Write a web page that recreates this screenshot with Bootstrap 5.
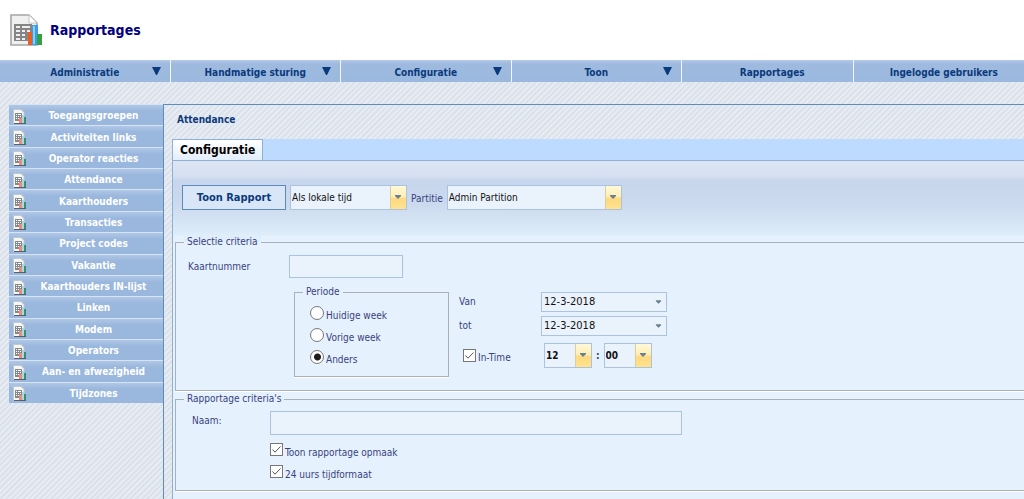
<!DOCTYPE html>
<html lang="nl">
<head>
<meta charset="utf-8">
<meta name="viewport" content="width=device-width, initial-scale=1">
<title>Rapportages</title>
<link href="https://cdn.jsdelivr.net/npm/bootstrap@5.3.0/dist/css/bootstrap.min.css" rel="stylesheet">
<style>
body{font-family:"DejaVu Sans Condensed","DejaVu Sans",sans-serif;font-size:10px;line-height:12px;color:#3a3f80;
  background:repeating-linear-gradient(135deg,#dbe2ec 0 2px,#e7ebf2 2px 4px)}
.site-head{height:60px;padding:0 10px}
.site-head h1{font-size:14px;line-height:18px;color:#000080}
.menu-bar{background:linear-gradient(#b4c9e6,#9ebadf 4px,#9bb8de);height:22px}
.menu-item{flex:1 1 0;color:#0b3a7c;border-right:1px solid #f2f7fd;padding:3px 0 0 10px}
.menu-item:last-child{border-right:0}
.menu-item.has-menu{padding-right:9px;padding-left:0}
.menu-item svg{margin-bottom:3px}
.menu-item:hover{color:#000080}
.menu-text{flex:1;text-align:center}
.has-menu .menu-text{margin-right:-18px}
.content-row{padding:22px 0 0 9px}
.side-menu{width:154px;min-height:299px;grid-auto-rows:1fr}
.side-menu a{color:#fff;border-top:1px solid #d5e3f4;background:linear-gradient(#b0c8e6,#9ab7dd 6px,#9ab7dd);padding:2px 0 0 4px}
.side-menu span{flex:1;text-align:center;margin-right:3px}
.panel{border:solid #5c8ebd;border-width:1px 0 0 1px;padding-left:8px;min-width:0}
.panel-title{color:#0b3a7c;padding:9px 5px 13px}
.tab-strip{background:#bddaff;border-bottom:1px solid #8eafd6}
.tab-btn{font-size:12px;line-height:20px;color:#000;border:solid #8eafd6;border-width:1px 1px 0 1px;background:linear-gradient(#fff,#e3eefb);padding:0 7px;border-radius:0}
.tab-body{border-left:1px solid #8eafd6;background:#e5f2fd;padding:0 0 0 2px}
.tool-row{height:75px;margin-left:-2px;padding:24px 0 0 9px;
  background:linear-gradient(#dce5f3 0,#d5e0f1 15px,#c7d6ec 20px,#cbdaee 44px,#dfeefa 75px)}
.report-btn{width:104px;height:25px;color:#0b3a7c;background:#d8e6f7;border:1px solid #5b8bbd;border-radius:0;font-size:11px;line-height:12px}
.pick{appearance:none;height:25px;border:1px solid #abc3e0;border-radius:0;background-color:#eaf2fc;color:#111;padding:0 20px 0 1px;
  background-image:url("data:image/svg+xml,%3Csvg xmlns='http://www.w3.org/2000/svg' viewBox='0 0 8 5'%3E%3Cpath d='M1 0h6v1L4 4 1 1z' fill='%23698094'/%3E%3C/svg%3E"),linear-gradient(90deg,#d9cf9d 0 1px,transparent 1px),linear-gradient(#fff9d9 0,#ffefb4 45%,#ffd981 55%,#ffe38d);
  background-repeat:no-repeat;background-size:8px 5px,16px 100%,16px 100%;background-position:right 4px center,right,right}
.pick-time{width:117px}
.pick-part{width:175px}
.pick-hour{width:48px;font-weight:bold}
.pick-date{width:126px;height:20px;font-size:11px;background-size:7px 5px;padding-left:2px;
  background-image:url("data:image/svg+xml,%3Csvg xmlns='http://www.w3.org/2000/svg' viewBox='0 0 8 5'%3E%3Cpath d='M1 0h6v1L4 4 1 1z' fill='%23698094'/%3E%3C/svg%3E")}
.field{height:23px;border:1px solid #abc3e0;border-radius:0;background:#eaf2fc}
.box{border:1px solid #a9b1b8;box-shadow:0 1px #fff;min-width:0}
.box-open{border-right:0}
.box legend{float:none;width:auto;margin:0 0 0 8px;padding:0 3px;font-size:10px;line-height:12px;background:#e5f2fd}
.select-box{padding:0 0 13px}
.select-box>legend{background:linear-gradient(#dfeefa 6px,#e5f2fd 6px)}
.card-row{margin-top:7px}
.col-label{width:105px;padding-left:12px}
.card-no{width:114px}
.period-row{padding-left:118px}
.period{width:155px;padding:8px 0 4px}
.period .opt{padding-left:15px}
.tick{appearance:none;flex:none;width:13px;height:13px;border:1px solid #777;background:#fff center/11px no-repeat;margin:0 2px 0 0}
.tick[type=radio]{width:14px;height:14px;border-radius:50%}
.tick[type=radio]:checked{background-image:radial-gradient(circle,#1d1d1d 3px,transparent 4px)}
.tick[type=checkbox]:checked{background-image:url("data:image/svg+xml,%3Csvg xmlns='http://www.w3.org/2000/svg' viewBox='0 0 11 11'%3E%3Cpath d='M1.5 5.5 4 8.2 9.5 2.5' fill='none' stroke='%23555'/%3E%3C/svg%3E")}
.opt{height:22px}
.opt label{padding-top:4px}
.date-col{margin-left:10px;padding-top:6px}
.date-label{width:82px}
.in-time{padding-left:4px;margin-top:7px}
.in-time .date-label{width:81px}
.report-box{margin-top:2px;padding:0 0 3px}
.name-row{margin-top:6px;margin-bottom:8px}
.name-label{width:94px;padding-left:16px}
.name-field{width:412px;height:24px}
.report-opt{padding-left:94px}
</style>
</head>
<body class="min-vh-100 d-flex flex-column">
<svg class="d-none" aria-hidden="true">
  <symbol id="report" viewBox="0 0 32 32">
    <path d="M1 1h18l8 8v22H1z" fill="#f0f0f0" stroke="#a5a5a5" stroke-width="1.6"/>
    <path d="M19 1v8h8z" fill="#fff" stroke="#c4c4c4"/>
    <path d="M4 10h18v17H4z" fill="#858585"/>
    <path d="M6 12h4v2H6zm6 0h8v2h-8zM6 16h4v2H6zm6 0h3v2h-3zm5 0h3v2h-3zM6 20h4v2H6zm6 0h3v2h-3zM6 24h4v2H6zm6 0h3v2h-3z" fill="#efefef"/>
    <path d="M18 18h5v13h-5z" fill="#e85f24"/><path d="M22 11h6v20h-6z" fill="#3b9de8"/><path d="M23 12h2v18h-2z" fill="#8dcdf8"/>
    <path d="M27 20h5v11h-5z" fill="#35a043"/>
  </symbol>
  <symbol id="report-sm" viewBox="0 0 14 15">
    <path d="M.5.5H8l3 3v11H.5z" fill="#f7f7f4" stroke="#c3c8cc"/>
    <path d="M2 4h7v8H2z" fill="#85898b"/>
    <path d="M3 5h1v1H3zm2 0h3v1H5zM3 7h1v1H3zm2 0h1v1H5zm2 0h1v1H7zM3 9h1v1H3zm2 0h1v1H5z" fill="#fff"/>
    <path d="M6 9h3v5H6z" fill="#ee8b78"/><path d="M9 6h2v8H9z" fill="#a9d9e6"/><path d="M11 8h2v6h-2z" fill="#35906b"/>
    <path d="M1 14h12v1H1z" fill="#58606a"/>
  </symbol>
  <symbol id="arrow" viewBox="0 0 9 8"><path d="M0 0h9L5 8H4z" fill="#0b3a7c"/></symbol>
</svg>

<header class="site-head bg-white d-flex align-items-center">
  <svg width="32" height="32" aria-hidden="true"><use href="#report"/></svg>
  <h1 class="fw-bold mb-0 ms-2">Rapportages</h1>
</header>

<nav class="menu-bar d-flex fw-bold" aria-label="Hoofdmenu">
  <a href="#" class="menu-item has-menu d-flex align-items-center text-decoration-none"><span class="menu-text">Administratie</span><svg width="9" height="8"><use href="#arrow"/></svg></a>
  <a href="#" class="menu-item has-menu d-flex align-items-center text-decoration-none"><span class="menu-text">Handmatige sturing</span><svg width="9" height="8"><use href="#arrow"/></svg></a>
  <a href="#" class="menu-item has-menu d-flex align-items-center text-decoration-none"><span class="menu-text">Configuratie</span><svg width="9" height="8"><use href="#arrow"/></svg></a>
  <a href="#" class="menu-item has-menu d-flex align-items-center text-decoration-none"><span class="menu-text">Toon</span><svg width="9" height="8"><use href="#arrow"/></svg></a>
  <a href="#" class="menu-item d-flex align-items-center text-decoration-none"><span class="menu-text">Rapportages</span></a>
  <a href="#" class="menu-item d-flex align-items-center text-decoration-none"><span class="menu-text">Ingelogde gebruikers</span></a>
</nav>

<div class="content-row d-flex flex-grow-1">
  <nav class="side-menu d-grid fw-bold align-self-start flex-shrink-0" aria-label="Rapporten">
    <a href="#" class="d-flex align-items-center text-decoration-none"><svg width="14" height="15"><use href="#report-sm"/></svg><span>Toegangsgroepen</span></a>
    <a href="#" class="d-flex align-items-center text-decoration-none"><svg width="14" height="15"><use href="#report-sm"/></svg><span>Activiteiten links</span></a>
    <a href="#" class="d-flex align-items-center text-decoration-none"><svg width="14" height="15"><use href="#report-sm"/></svg><span>Operator reacties</span></a>
    <a href="#" class="d-flex align-items-center text-decoration-none"><svg width="14" height="15"><use href="#report-sm"/></svg><span>Attendance</span></a>
    <a href="#" class="d-flex align-items-center text-decoration-none"><svg width="14" height="15"><use href="#report-sm"/></svg><span>Kaarthouders</span></a>
    <a href="#" class="d-flex align-items-center text-decoration-none"><svg width="14" height="15"><use href="#report-sm"/></svg><span>Transacties</span></a>
    <a href="#" class="d-flex align-items-center text-decoration-none"><svg width="14" height="15"><use href="#report-sm"/></svg><span>Project codes</span></a>
    <a href="#" class="d-flex align-items-center text-decoration-none"><svg width="14" height="15"><use href="#report-sm"/></svg><span>Vakantie</span></a>
    <a href="#" class="d-flex align-items-center text-decoration-none"><svg width="14" height="15"><use href="#report-sm"/></svg><span>Kaarthouders IN-lijst</span></a>
    <a href="#" class="d-flex align-items-center text-decoration-none"><svg width="14" height="15"><use href="#report-sm"/></svg><span>Linken</span></a>
    <a href="#" class="d-flex align-items-center text-decoration-none"><svg width="14" height="15"><use href="#report-sm"/></svg><span>Modem</span></a>
    <a href="#" class="d-flex align-items-center text-decoration-none"><svg width="14" height="15"><use href="#report-sm"/></svg><span>Operators</span></a>
    <a href="#" class="d-flex align-items-center text-decoration-none"><svg width="14" height="15"><use href="#report-sm"/></svg><span>Aan- en afwezigheid</span></a>
    <a href="#" class="d-flex align-items-center text-decoration-none"><svg width="14" height="15"><use href="#report-sm"/></svg><span>Tijdzones</span></a>
  </nav>

  <main class="panel flex-grow-1 d-flex flex-column">
    <div class="panel-title fw-bold">Attendance</div>
    <div class="tab-strip d-flex" role="tablist"><button type="button" role="tab" aria-selected="true" class="tab-btn fw-bold">Configuratie</button></div>
    <form class="tab-body flex-grow-1">
      <div class="tool-row d-flex align-items-start">
        <button type="button" class="report-btn fw-bold p-0 me-1">Toon Rapport</button>
        <select class="pick pick-time" aria-label="Tijd"><option>Als lokale tijd</option></select>
        <label for="part" class="mx-1 pt-2">Partitie</label>
        <select id="part" class="pick pick-part"><option>Admin Partition</option></select>
      </div>

      <fieldset class="box box-open select-box">
        <legend>Selectie criteria</legend>
        <div class="card-row d-flex align-items-center">
          <label for="card-no" class="col-label">Kaartnummer</label>
          <input id="card-no" type="text" class="field card-no ms-2 ps-1">
        </div>
        <div class="period-row d-flex align-items-start mt-2">
          <fieldset class="box period">
            <legend>Periode</legend>
            <div class="opt d-flex align-items-start"><input class="tick" type="radio" name="p" id="p1"><label for="p1">Huidige week</label></div>
            <div class="opt d-flex align-items-start"><input class="tick" type="radio" name="p" id="p2"><label for="p2">Vorige week</label></div>
            <div class="opt d-flex align-items-start"><input class="tick" type="radio" name="p" id="p3" checked><label for="p3">Anders</label></div>
          </fieldset>
          <div class="date-col">
            <div class="d-flex align-items-center mb-1"><label for="from" class="date-label">Van</label><select id="from" class="pick pick-date"><option>12-3-2018</option></select></div>
            <div class="d-flex align-items-center"><label for="to" class="date-label">tot</label><select id="to" class="pick pick-date"><option>12-3-2018</option></select></div>
            <div class="in-time d-flex align-items-center">
              <div class="date-label d-flex align-items-center"><input class="tick" type="checkbox" id="in" checked><label for="in" class="pt-1">In-Time</label></div>
              <select class="pick pick-hour" aria-label="Uur"><option>12</option></select>
              <span class="px-1 fw-bold">:</span>
              <select class="pick pick-hour" aria-label="Minuut"><option>00</option></select>
            </div>
          </div>
        </div>
      </fieldset>

      <fieldset class="box box-open report-box">
        <legend>Rapportage criteria's</legend>
        <div class="name-row d-flex"><label for="name" class="name-label pt-1">Naam:</label><input id="name" type="text" class="field name-field"></div>
        <div class="opt report-opt d-flex align-items-start"><input class="tick" type="checkbox" id="o1" checked><label for="o1">Toon rapportage opmaak</label></div>
        <div class="opt report-opt d-flex align-items-start"><input class="tick" type="checkbox" id="o2" checked><label for="o2">24 uurs tijdformaat</label></div>
      </fieldset>
    </form>
  </main>
</div>
</body>
</html>
